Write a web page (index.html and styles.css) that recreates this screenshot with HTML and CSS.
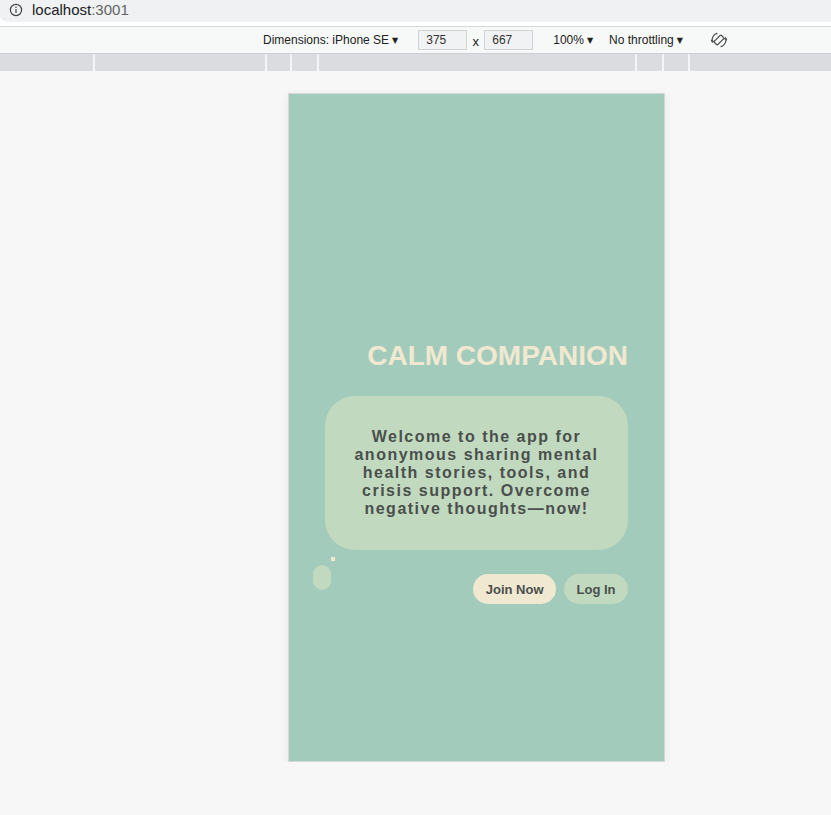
FILE: index.html
```html
<!DOCTYPE html>
<html lang="en">
<head>
    <meta charset="UTF-8">
    <meta name="viewport" content="width=device-width, initial-scale=1.0">
    <title>Calm Companion</title>
    <link rel="stylesheet" href="styles.css">
</head>
<body>

<div class="url-bar">
    <div class="url-field">
        <svg class="info-icon" width="14" height="14" viewBox="0 0 14 14">
            <circle cx="7" cy="7" r="5.6" fill="none" stroke="#444" stroke-width="1.2"/>
            <rect x="6.4" y="6" width="1.2" height="4" fill="#444"/>
            <circle cx="7" cy="4.3" r="0.8" fill="#444"/>
        </svg>
        <span class="host">localhost</span><span class="port">:3001</span>
    </div>
</div>

<div class="device-toolbar">
    <span class="dim-label">Dimensions: iPhone SE<span class="caret">&#9660;</span></span>
    <span class="num-box">375</span>
    <span class="times">x</span>
    <span class="num-box">667</span>
    <span class="zoom-label">100%<span class="caret">&#9660;</span></span>
    <span class="throttle-label">No throttling<span class="caret">&#9660;</span></span>
    <svg class="rotate-icon" width="18" height="18" viewBox="0 0 18 18">
        <g fill="none" stroke="#555" stroke-width="1.3" stroke-linecap="round">
            <rect x="6.6" y="4" width="4.8" height="10" rx="1.4" transform="rotate(45 9 9)"/>
            <path d="M2.4 11 A6.8 6.8 0 0 1 7 2.4"/>
            <path d="M15.6 7 A6.8 6.8 0 0 1 11 15.6"/>
            <path d="M2.4 11 L1.4 9.2 M2.4 11 L4.1 10.1"/>
            <path d="M15.6 7 L16.6 8.8 M15.6 7 L13.9 7.9"/>
        </g>
    </svg>
</div>

<div class="ruler">
    <div class="seg" style="width: 93px"></div>
    <div class="seg" style="width: 170px"></div>
    <div class="seg" style="width: 23px"></div>
    <div class="seg" style="width: 25px"></div>
    <div class="seg" style="width: 316px"></div>
    <div class="seg" style="width: 25px"></div>
    <div class="seg" style="width: 24px"></div>
    <div class="seg seg-last"></div>
</div>

<div class="stage">
    <div class="phone">
        <div class="screen">
            <h1 class="title">CALM COMPANION</h1>
            <div class="bubble-wrap">
                <div class="bubble">
                    <p>Welcome to the app for anonymous sharing mental health stories, tools, and crisis support. Overcome negative thoughts&mdash;now!</p>
                </div>
                <span class="dot-small"></span>
                <span class="dot-pill"></span>
            </div>
            <div class="actions">
                <button class="btn btn-join">Join Now</button>
                <button class="btn btn-login">Log In</button>
            </div>
        </div>
    </div>
</div>

</body>
</html>
```

FILE: styles.css
```css
body {
    margin: 0;
    background-color: #f6f7f6;
    font-family: "Liberation Sans", Arial, sans-serif;
    overflow: hidden;
}

/* browser chrome */
.url-bar {
    height: 26px;
    background-color: #fff;
    border-bottom: 1px solid #d6d8da;
    overflow: hidden;
}

.url-field {
    height: 22px;
    margin-left: -4px;
    margin-right: -20px;
    padding-left: 13px;
    background-color: #eff1f2;
    border-radius: 0 0 14px 14px;
    display: flex;
    align-items: center;
    font-size: 15px;
    line-height: 18px;
    padding-bottom: 3px;
    box-sizing: border-box;
}

.info-icon {
    margin-right: 9px;
}

.host {
    color: #202124;
}

.port {
    color: #5f6368;
}

.device-toolbar {
    height: 26px;
    background-color: #f7f8f8;
    border-bottom: 1px solid #cdd0d2;
    display: flex;
    align-items: center;
    padding-left: 263px;
    font-size: 12px;
    color: #222;
}

.caret {
    font-family: "DejaVu Sans", sans-serif;
    font-size: 8px;
    margin-left: 3px;
    position: relative;
    top: -1px;
}

.dim-label {
    margin-right: 20px;
}

.num-box {
    width: 49px;
    height: 20px;
    box-sizing: border-box;
    border: 1px solid #d0d2d4;
    background-color: #f1f2f3;
    padding-left: 7px;
    line-height: 18px;
    color: #333;
}

.times {
    width: 17px;
    text-align: center;
    font-size: 13px;
    padding-top: 3px;
}

.zoom-label {
    margin-left: 20px;
    margin-right: 16px;
}

.rotate-icon {
    margin-left: 27px;
}

.ruler {
    height: 17px;
    display: flex;
    background-color: #f4f5f6;
}

.seg {
    background-color: #dbdce0;
    margin-right: 2px;
}

.seg-last {
    flex: 1;
    margin-right: 0;
}

/* device */
.stage {
    padding-top: 22px;
    padding-left: 288px;
}

.phone {
    width: 375px;
    height: 667px;
    border: 1px solid #d5d8d7;
    background-color: #a3cbbb;
    box-shadow: 0 2px 10px rgba(0, 0, 0, 0.07);
}

.screen {
    padding: 246px 36px 0 36px;
    display: flex;
    flex-direction: column;
}

.title {
    margin: 0;
    font-size: 28px;
    line-height: 32px;
    font-weight: bold;
    text-align: right;
    color: #f0e8d1;
}

.bubble-wrap {
    position: relative;
    margin-top: 24px;
}

.bubble {
    background-color: #c0d9bf;
    border-radius: 30px;
    padding: 32px 24px;
    text-align: center;
}

.bubble p {
    margin: 0;
    font-size: 16px;
    line-height: 18px;
    font-weight: bold;
    letter-spacing: 1.5px;
    color: #4a4f4c;
}

.dot-small {
    position: absolute;
    left: 6px;
    top: 161px;
    width: 4px;
    height: 4px;
    background-color: #f0e8d1;
}

.dot-pill {
    position: absolute;
    left: -12px;
    top: 169px;
    width: 18px;
    height: 25px;
    border-radius: 9px;
    background-color: #c0d9bf;
}

.actions {
    margin-top: 24px;
    display: flex;
    justify-content: flex-end;
    gap: 8px;
}

.btn {
    font-family: "Liberation Sans", Arial, sans-serif;
    font-size: 13px;
    line-height: 16px;
    font-weight: bold;
    padding: 8px 12.5px 6px;
    border: none;
    border-radius: 15px;
    color: #4a4f4c;
    cursor: pointer;
}

.btn-join {
    background-color: #f0e8d1;
}

.btn-login {
    background-color: #c0d9bf;
}
```
